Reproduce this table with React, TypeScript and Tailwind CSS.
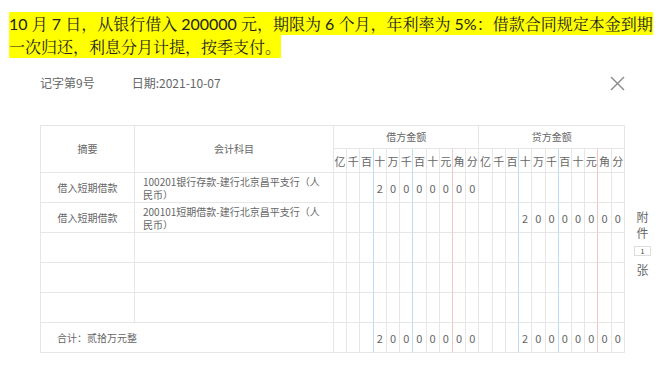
import React from "react";

const DEBIT_LABELS = ["亿", "千", "百", "十", "万", "千", "百", "十", "元", "角", "分"];

function lineColor(i: number) {
  if (i === 2 || i === 5) return "border-r-[#bcdcf0]";
  if (i === 8) return "border-r-[#f2c4c4]";
  return "border-r-[#e6e6e6]";
}

const cellBase = "border-r border-b border-[#e6e6e6] p-0 text-center align-middle whitespace-nowrap";

function DigitCells({ digits }: { digits: string[] }) {
  return (
    <>
      {digits.map((d, i) => (
        <td key={i} className={`${cellBase} ${lineColor(i % 11)}`}>
          {d}
        </td>
      ))}
    </>
  );
}

const EMPTY = Array(22).fill("");
const AMT = ["", "", "", "2", "0", "0", "0", "0", "0", "0", "0"];
const BLANK11 = Array(11).fill("");

export default function App() {
  const fontCJK = { fontFamily: "'Noto Sans CJK SC', sans-serif" };
  return (
    <div className="w-[660px] h-[368px] bg-white overflow-hidden relative">
      <div
        className="pt-[12px] pl-[9px] text-[16px] leading-[23px] text-[#222] whitespace-nowrap"
        style={{ fontFamily: "Lato, 'Noto Serif CJK SC', 'Noto Sans CJK SC', serif" }}
      >
        <div className="w-fit bg-[#ffff00]">
          10 月 7 日，从银行借入 200000 元，期限为 6 个月，年利率为 5%：借款合同规定本金到期
        </div>
        <div className="w-fit bg-[#ffff00]">一次归还，利息分月计提，按季支付。</div>
      </div>

      <div className="mt-[17px] h-[16px] flex items-center text-[12px] text-[#666]" style={fontCJK}>
        <span className="ml-[40px]">记字第9号</span>
        <span className="ml-[37px]">日期:2021-10-07</span>
        <svg className="ml-auto mr-[35px]" width="15" height="15" viewBox="0 0 15 15">
          <line x1="1" y1="1" x2="14" y2="14" stroke="#8c8c8c" strokeWidth="1.4" />
          <line x1="14" y1="1" x2="1" y2="14" stroke="#8c8c8c" strokeWidth="1.4" />
        </svg>
      </div>

      <div className="mt-[34px] ml-[40px] flex items-start" style={fontCJK}>
        <table className="w-[585px] table-fixed border-separate border-spacing-0 border-l border-t border-[#e6e6e6] text-[10px] leading-[12px] text-[#666]">
          <colgroup>
            <col className="w-[94px]" />
            <col className="w-[199px]" />
            {EMPTY.map((_, i) => (
              <col key={i} />
            ))}
          </colgroup>
          <tbody>
            <tr className="h-[23px]">
              <td rowSpan={2} className={cellBase}>
                摘要
              </td>
              <td rowSpan={2} className={cellBase}>
                会计科目
              </td>
              <td colSpan={11} className={cellBase}>
                借方金额
              </td>
              <td colSpan={11} className={cellBase}>
                贷方金额
              </td>
            </tr>
            <tr className="h-[24px] text-[11px]">
              <DigitCells digits={[...DEBIT_LABELS, ...DEBIT_LABELS]} />
            </tr>
            <tr className="h-[30px] text-[11px]">
              <td className={`${cellBase} text-[10px]`}>借入短期借款</td>
              <td className={`${cellBase} text-left pl-[8px] text-[10px] leading-[13px]`}>
                100201银行存款-建行北京昌平支行（人
                <br />
                民币）
              </td>
              <DigitCells digits={[...AMT, ...BLANK11]} />
            </tr>
            <tr className="h-[30px] text-[11px]">
              <td className={`${cellBase} text-[10px]`}>借入短期借款</td>
              <td className={`${cellBase} text-left pl-[8px] text-[10px] leading-[13px]`}>
                200101短期借款-建行北京昌平支行（人
                <br />
                民币）
              </td>
              <DigitCells digits={[...BLANK11, ...AMT]} />
            </tr>
            {[0, 1, 2].map((r) => (
              <tr key={r} className="h-[30px]">
                <td className={cellBase}></td>
                <td className={cellBase}></td>
                <DigitCells digits={EMPTY} />
              </tr>
            ))}
            <tr className="h-[30px] text-[11px]">
              <td colSpan={2} className={`${cellBase} text-left pl-[16px] text-[10px]`}>
                合计：贰拾万元整
              </td>
              <DigitCells digits={[...AMT, ...AMT]} />
            </tr>
          </tbody>
        </table>
        <div className="ml-[9px] mt-[84px] flex flex-col items-center w-[17px] text-[12px] leading-[16px] text-[#666]">
          <span>附</span>
          <span>件</span>
          <span className="mt-[5px] w-[17px] h-[10px] border border-[#dddddd] text-[7px] leading-[8px] text-center text-[#444]">
            1
          </span>
          <span className="mt-[6px]">张</span>
        </div>
      </div>
    </div>
  );
}
